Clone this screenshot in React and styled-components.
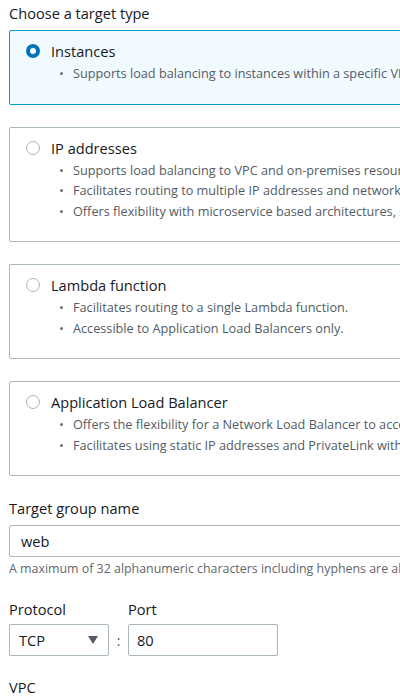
import React from 'react';
import styled, { createGlobalStyle } from 'styled-components';

const GlobalStyle = createGlobalStyle`
  html, body {
    margin: 0;
    padding: 0;
    background: #ffffff;
    overflow: hidden;
  }
  body {
    font-family: "Open Sans", "Noto Sans", Arial, sans-serif;
    color: #16191f;
    -webkit-font-smoothing: antialiased;
  }
`;

const Page = styled.div`
  width: 720px;
  padding: 3px 0 0 9px;
  display: flex;
  flex-direction: column;
`;

const FieldLabel = styled.div`
  font-size: 14.6px;
  line-height: 20px;
  color: #16191f;
  margin-top: ${p => p.$top || 0}px;
  margin-bottom: ${p => p.$bottom || 0}px;
`;

const CardList = styled.div`
  display: flex;
  flex-direction: column;
  gap: 22px;
  margin-top: 7px;
`;

const Card = styled.label`
  display: flex;
  align-items: flex-start;
  gap: 11px;
  padding: 10px 16px 20px;
  border: 1px solid ${p => (p.$selected ? '#00a1c9' : '#aab7b8')};
  background: ${p => (p.$selected ? '#f1faff' : '#ffffff')};
  border-radius: 2px;
`;

const Radio = styled.span`
  flex: none;
  box-sizing: border-box;
  width: 14px;
  height: 14px;
  margin-top: 3px;
  border-radius: 50%;
  background: #ffffff;
  border: ${p => (p.$checked ? '4.5px solid #0073bb' : '1px solid #aab7b8')};
`;

const CardBody = styled.div`
  display: flex;
  flex-direction: column;
`;

const CardTitle = styled.div`
  font-size: 14.6px;
  line-height: 20px;
  color: #16191f;
`;

const Bullets = styled.ul`
  margin: 2px 0 0;
  padding: 0 0 0 22px;
  list-style: none;
`;

const Bullet = styled.li`
  position: relative;
  font-size: 12.7px;
  line-height: 20.5px;
  color: #545b64;
  white-space: nowrap;

  &::before {
    content: '';
    position: absolute;
    left: -13px;
    top: 9px;
    width: 3px;
    height: 3px;
    border-radius: 50%;
    background: #687078;
  }
`;

const TextInput = styled.div`
  box-sizing: border-box;
  height: 32px;
  width: ${p => p.$width || 'auto'};
  padding: 0 ${p => p.$pad || 11}px;
  display: flex;
  align-items: center;
  border: 1px solid #aab7b8;
  border-radius: 2px;
  font-size: 14.6px;
  color: #16191f;
  background: #ffffff;
`;

const Hint = styled.div`
  margin-top: 4px;
  font-size: 12.4px;
  line-height: 16px;
  color: #5f666d;
  white-space: nowrap;
`;

const Row = styled.div`
  display: flex;
  align-items: flex-start;
  margin-top: 22px;
`;

const Field = styled.div`
  display: flex;
  flex-direction: column;
  gap: 5px;
`;

const Select = styled(TextInput)`
  justify-content: space-between;
  padding: 0 10px 0 9px;
`;

const Caret = styled.span`
  width: 0;
  height: 0;
  border-left: 5px solid transparent;
  border-right: 5px solid transparent;
  border-top: 8px solid #545b64;
`;

const Colon = styled.span`
  width: 19px;
  height: 32px;
  margin-top: 25px;
  display: flex;
  align-items: center;
  justify-content: center;
  font-size: 14px;
  color: #545b64;
`;

const targets = [
  {
    title: 'Instances',
    selected: true,
    bullets: ['Supports load balancing to instances within a specific VPC.'],
  },
  {
    title: 'IP addresses',
    bullets: [
      'Supports load balancing to VPC and on-premises resources.',
      'Facilitates routing to multiple IP addresses and network interfaces on the same instance.',
      'Offers flexibility with microservice based architectures, simplifying inter-application communication.',
    ],
  },
  {
    title: 'Lambda function',
    bullets: [
      'Facilitates routing to a single Lambda function.',
      'Accessible to Application Load Balancers only.',
    ],
  },
  {
    title: 'Application Load Balancer',
    bullets: [
      'Offers the flexibility for a Network Load Balancer to accept and route TCP requests within a specific VPC.',
      'Facilitates using static IP addresses and PrivateLink with an Application Load Balancer.',
    ],
  },
];

export default function App() {
  return (
    <>
      <GlobalStyle />
      <Page>
        <FieldLabel>Choose a target type</FieldLabel>
        <CardList>
          {targets.map(t => (
            <Card key={t.title} $selected={t.selected}>
              <Radio $checked={t.selected} />
              <CardBody>
                <CardTitle>{t.title}</CardTitle>
                <Bullets>
                  {t.bullets.map(b => (
                    <Bullet key={b}>{b}</Bullet>
                  ))}
                </Bullets>
              </CardBody>
            </Card>
          ))}
        </CardList>

        <FieldLabel $top={22} $bottom={7}>Target group name</FieldLabel>
        <TextInput>web</TextInput>
        <Hint>A maximum of 32 alphanumeric characters including hyphens are allowed, but the name must not begin or end with a hyphen.</Hint>

        <Row>
          <Field>
            <FieldLabel>Protocol</FieldLabel>
            <Select $width="100px">
              TCP
              <Caret />
            </Select>
          </Field>
          <Colon>:</Colon>
          <Field>
            <FieldLabel>Port</FieldLabel>
            <TextInput $width="150px" $pad={8}>80</TextInput>
          </Field>
        </Row>

        <FieldLabel $top={21}>VPC</FieldLabel>
      </Page>
    </>
  );
}
